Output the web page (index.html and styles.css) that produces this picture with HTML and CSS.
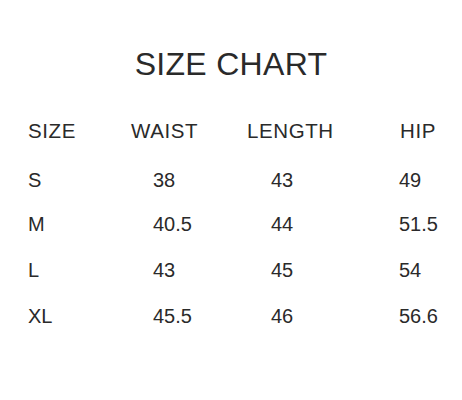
FILE: index.html
```html
<!DOCTYPE html>
<html>
<head>
<meta charset="utf-8">
<link rel="stylesheet" href="styles.css">
</head>
<body>
<div class="page">
  <h1 class="title">SIZE CHART</h1>
  <div class="chart">
    <div class="head">SIZE</div><div class="head">WAIST</div><div class="head">LENGTH</div><div class="head">HIP</div>
    <div class="cell size">S</div><div class="cell waist">38</div><div class="cell length">43</div><div class="cell hip">49</div>
    <div class="cell size">M</div><div class="cell waist">40.5</div><div class="cell length">44</div><div class="cell hip">51.5</div>
    <div class="cell size">L</div><div class="cell waist">43</div><div class="cell length">45</div><div class="cell hip">54</div>
    <div class="cell size">XL</div><div class="cell waist">45.5</div><div class="cell length">46</div><div class="cell hip">56.6</div>
  </div>
</div>
</body>
</html>
```
FILE: styles.css
```css
html, body {
  margin: 0;
  padding: 0;
  background: #ffffff;
}
.page {
  box-sizing: border-box;
  width: 462px;
  height: 400px;
  padding-top: 48px;
  font-family: "Liberation Sans", Arial, sans-serif;
  color: #2a2a2a;
}
.title {
  margin: 0;
  font-size: 32px;
  line-height: 32px;
  font-weight: normal;
  letter-spacing: 0.3px;
  text-align: center;
}
.chart {
  margin-top: 41px;
  padding-left: 28px;
  display: grid;
  grid-template-columns: 103px 116px 153px 1fr;
  grid-template-rows: 49px 44px 46px 46px 20px;
}
.head {
  font-size: 20.5px;
  line-height: 20px;
  letter-spacing: 0.6px;
}
.cell {
  font-size: 20px;
  line-height: 20px;
}
.cell.waist { padding-left: 22px; }
.cell.length { padding-left: 24px; }
.cell.hip { margin-left: -1px; }
```
